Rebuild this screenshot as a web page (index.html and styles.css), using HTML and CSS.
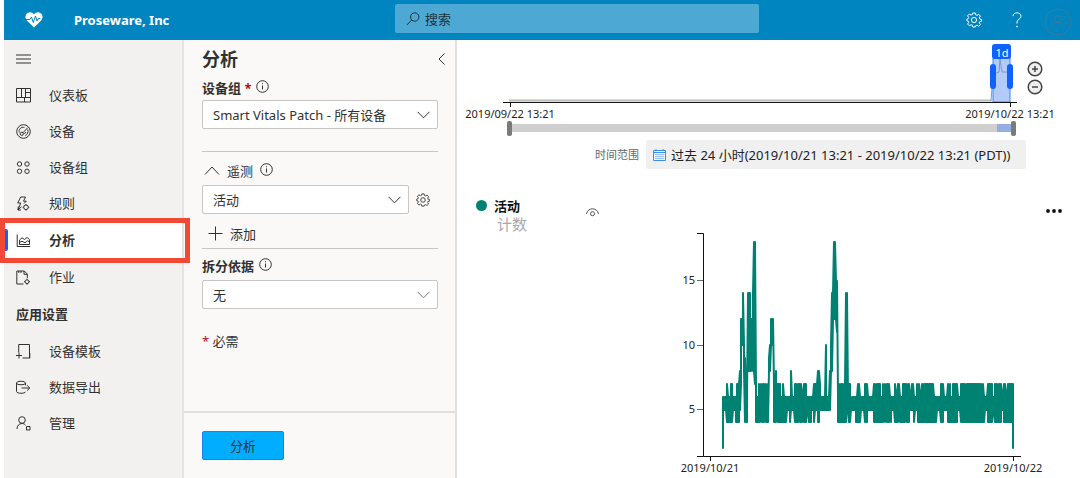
FILE: index.html
```html
<!DOCTYPE html>
<html lang="zh-CN">
<head>
<meta charset="utf-8">
<title>Proseware, Inc</title>
<link rel="stylesheet" href="styles.css">
</head>
<body>
<div class="app">
  <header class="topbar">
    <svg class="logo" viewBox="0 0 18 16" width="18" height="16" aria-hidden="true">
      <path fill="#fff" d="M9 15.600 2.300 9C-.6 6 .2 2.300 2.600.9 4.800-.3 7.600.3 9 2.600 10.400.3 13.200-.3 15.400.9 17.800 2.300 18.600 6 15.700 9Z"/>
      <path class="line pulse" d="M.5 7.500H5L6.500 5l1.800 5.500L10.500 4l1.600 5 1.200-2.500h2"/>
    </svg>
    <h1 class="brand">Proseware, Inc</h1>
    <label class="search">
      <svg class="line" viewBox="0 0 14 14" width="14" height="14" aria-hidden="true"><circle cx="8.700" cy="5" r="4.200"/><path d="M5.700 8 .8 13"/></svg>
      <input type="search" placeholder="搜索" aria-label="搜索">
    </label>
    <div class="tools">
      <button class="icon-btn" aria-label="设置">
        <svg class="line" viewBox="0 0 16 16" width="16" height="16"><use href="#gear"/></svg>
      </button>
      <button class="icon-btn help" aria-label="帮助">
        <svg class="line" viewBox="0 0 10 16" width="10" height="16"><path d="M1 4.200C1 2.200 2.700.8 4.900.8S9 2.200 9 4.300C9 7 5 7.400 5 10v1.500"/><circle cx="5" cy="14.500" r=".5"/></svg>
      </button>
      <button class="icon-btn account" aria-label="帐户">
        <svg class="line" viewBox="0 0 28 28" width="28" height="28"><circle cx="14" cy="14" r="13"/><circle cx="14" cy="11" r="3.500"/><path d="M9 20v-1c0-2.700 2.200-4.500 5-4.500s5 1.800 5 4.500v1"/></svg>
      </button>
    </div>
  </header>

  <div class="body">
    <nav class="sidebar">
      <button class="menu-btn" aria-label="菜单">
        <svg class="line" viewBox="0 0 15 10" width="15" height="10"><path d="M0 1h15M0 5h15M0 9h15"/></svg>
      </button>
      <ul class="nav">
        <li><a class="nav-item" href="#"><svg class="line" viewBox="0 0 15 15" width="15" height="15"><path d="M.5.500h14v13.500H.5ZM5.500.5v9M.5 9.500h14M9.500 9.500V.5M9.500 4.500h5M8.500 9.500V14"/></svg>仪表板</a></li>
        <li><a class="nav-item" href="#"><svg class="line" viewBox="0 0 15 15" width="15" height="15"><circle cx="7.500" cy="7.500" r="6.800"/><circle cx="5.800" cy="9.800" r="1.600"/><path d="m7 8.700 4.700-5M3.300 8.500C2.500 5.500 4.500 3.500 7 3.300c1 0 1.500.2 1.500.2M11.800 5.500c.8 2.500-.2 5-2.500 6.200M8.300 10l1.700-2"/></svg>设备</a></li>
        <li><a class="nav-item" href="#"><svg class="line" viewBox="0 0 15 15" width="15" height="15"><circle cx="3.500" cy="4" r="2.200"/><circle cx="11" cy="4" r="2.200"/><circle cx="3.500" cy="11.300" r="2.200"/><circle cx="11" cy="11.300" r="2.200"/></svg>设备组</a></li>
        <li><a class="nav-item" href="#"><svg class="line" viewBox="0 0 15 15" width="15" height="15"><path d="M9.500 1H4.700L1.700 7h3L2 14l3.500-3.300M9.500 1 7.500 5.200h2.800L8 7.500M2 14l.3-3.500M2 14h3"/><circle cx="10" cy="11.300" r="2.300"/><path d="M10 8v1M10 13.600v1M6.700 11.300h1M12.300 11.300h1"/></svg>规则</a></li>
        <li><a class="nav-item selected" href="#" aria-current="page"><svg class="line" viewBox="0 0 15 15" width="15" height="15"><path d="M1.200 1.500v12h13M3.500 11.500V7l2.500-2.200 2.500 1.700 2.700-2.200 2.300 2.500v4.700ZM3.500 9.500l2.500-1.300 3 1.600 2.500-2 2 1"/></svg>分析</a></li>
        <li><a class="nav-item" href="#"><svg class="line" viewBox="0 0 15 15" width="15" height="15"><path d="M7.500 14H.8V1h7.500l3 3v4M8 1v3.300h3.300M2.800 1v2M5 1v2"/><circle cx="11" cy="11.700" r="1.900"/><path d="M11 8.700v1M11 13.700v1M8 11.700h1M13 11.700h1"/></svg>作业</a></li>
        <li class="nav-heading">应用设置</li>
        <li><a class="nav-item" href="#"><svg class="line" viewBox="0 0 15 15" width="15" height="15"><path d="M2.700 8.500V.5h10.800v13.500H6.500M0 11.500h6M3 8.500v6M13.800 9v5.300"/></svg>设备模板</a></li>
        <li><a class="nav-item" href="#"><svg class="line" viewBox="0 0 15 15" width="15" height="15"><ellipse cx="5" cy="3" rx="4.500" ry="1.800"/><path d="M.5 3v8.500c0 2.300 9 2.300 9 .2M9.500 3v2.500M5.500 8h8.200M11 5.300 13.800 8 11 10.700"/></svg>数据导出</a></li>
        <li><a class="nav-item" href="#"><svg class="line" viewBox="0 0 15 15" width="15" height="15"><circle cx="6" cy="4" r="3.300"/><path d="M1 13c0-3.300 2-5.500 5-5.500 1.500 0 2.700.6 3.500 1.500M10.500 10.500h3.500v3.500h-3.500Z"/></svg>管理</a></li>
      </ul>
      <div class="callout" aria-hidden="true"></div>
    </nav>

    <form class="panel">
      <div class="panel-body">
        <div class="panel-head">
          <h2>分析</h2>
          <button type="button" class="icon-btn" aria-label="折叠">
            <svg class="line" viewBox="0 0 8 12" width="8" height="12"><path d="M6.500.5 1 6l5.500 5.500"/></svg>
          </button>
        </div>
        <div class="label-row first">
          <label for="group">设备组 <span class="req">*</span></label>
          <svg class="line" viewBox="0 0 13 13" width="13" height="13"><use href="#info"/></svg>
        </div>
        <div class="field">
          <select id="group"><option>Smart Vitals Patch - 所有设备</option></select>
          <svg class="line" viewBox="0 0 13 8" width="13" height="8"><use href="#chev"/></svg>
        </div>
        <section class="telemetry">
          <div class="label-row plain">
            <svg class="line" viewBox="0 0 16 9" width="16" height="9"><path d="M1 8.500 8 1l7 7.500"/></svg>
            <label for="metric">遥测</label>
            <svg class="line" viewBox="0 0 13 13" width="13" height="13"><use href="#info"/></svg>
          </div>
          <div class="metric-row">
            <div class="field">
              <select id="metric"><option>活动</option></select>
              <svg class="line" viewBox="0 0 13 8" width="13" height="8"><use href="#chev"/></svg>
            </div>
            <button type="button" class="icon-btn" aria-label="遥测设置"><svg class="line" viewBox="0 0 16 16" width="14" height="14"><use href="#gear"/></svg></button>
          </div>
          <button type="button" class="add-btn">
            <svg class="line" viewBox="0 0 15 15" width="15" height="15"><path d="M7.500.5v14M.5 7.500h14"/></svg>添加
          </button>
        </section>
        <div class="label-row split">
          <label for="split">拆分依据</label>
          <svg class="line" viewBox="0 0 13 13" width="13" height="13"><use href="#info"/></svg>
        </div>
        <div class="field">
          <select id="split"><option>无</option></select>
          <svg class="line light" viewBox="0 0 13 8" width="13" height="8"><use href="#chev"/></svg>
        </div>
        <p class="required-note"><span class="req">*</span> 必需</p>
      </div>
      <div class="panel-foot"><button type="button" class="primary">分析</button></div>
    </form>

    <main class="content">
      <div class="overview">
        <svg class="overview-chart" viewBox="0 0 623 100" role="img" aria-label="2019/09/22 13:21 - 2019/10/22 13:21">
          <path class="ov-line" d="M52 60.500H534.500"/>
          <rect class="ov-window" x="536" y="18" width="17" height="44"/>
          <path class="ov-spike" d="M534 61 536 34l3-1 3-1 1-13 2 13h8"/>
          <rect class="ov-cap" x="535" y="4" width="19" height="15" rx="3"/>
          <text class="ov-cap-text" x="545" y="17">1d</text>
          <rect class="ov-handle" x="533" y="24" width="6" height="25" rx="3"/>
          <rect class="ov-handle" x="550" y="24" width="6" height="25" rx="3"/>
          <path class="axis" d="M46 62.500H560M53.500 62v5M553.500 62v5"/>
          <text class="axis-label" x="53" y="78">2019/09/22 13:21</text>
          <text class="axis-label" x="553" y="78">2019/10/22 13:21</text>
          <rect class="track" x="52" y="84" width="505" height="8"/>
          <rect class="track-window" x="540" y="84" width="17" height="8"/>
          <rect class="thumb" x="50" y="81" width="5" height="15" rx="2"/>
          <rect class="thumb" x="554" y="81" width="5" height="15" rx="2"/>
        </svg>
        <div class="zoom-btns">
          <button class="icon-btn" aria-label="放大"><svg viewBox="0 0 16 16" width="16" height="16"><circle cx="8" cy="8" r="6.800"/><path d="M8 5v6M5 8h6"/></svg></button>
          <button class="icon-btn" aria-label="缩小"><svg viewBox="0 0 16 16" width="16" height="16"><circle cx="8" cy="8" r="6.800"/><path d="M5 8h6"/></svg></button>
        </div>
      </div>
      <div class="range-row">
        <span class="range-label" id="range-label">时间范围</span>
        <button class="range-btn" aria-describedby="range-label">
          <svg class="calendar" viewBox="0 0 13 12" width="13" height="12"><path d="M.5 1.500h12v10H.5ZM.5 3.500h12M3 0v2M10 0v2"/><path class="cells" d="M2.500 5.500h8.500M2.500 7.500h8.500M2.500 9.500h8.500"/></svg>
          过去 24 小时(2019/10/21 13:21 - 2019/10/22 13:21 (PDT))
        </button>
      </div>
      <div class="legend">
        <span class="dot"></span>
        <div class="series"><strong>活动</strong><span>计数</span></div>
        <button class="icon-btn eye" aria-label="显示或隐藏"><svg viewBox="0 0 13 9" width="13" height="9"><path d="M.5 6C1.200 2.500 3.600.8 6.500.8S11.800 2.500 12.500 6"/><circle cx="6.500" cy="5.700" r="2"/></svg></button>
        <button class="icon-btn more" aria-label="更多"><svg viewBox="0 0 16 4" width="16" height="4"><circle cx="2" cy="2" r="1.900"/><circle cx="8" cy="2" r="1.900"/><circle cx="14" cy="2" r="1.900"/></svg></button>
      </div>
      <svg class="chart" viewBox="0 0 623 248" role="img" aria-label="活动">
        <path id="series" class="series-line"/>
        <path class="axis" d="M240 3.500h6.500v223H240M246.500 226.500H564M253.500 226v5M556.500 226v5"/>
        <path class="tick" d="M240 50.500h6M240 115.500h6M240 179.500h6"/>
        <g class="y-label"><text x="238" y="54">15</text><text x="238" y="119">10</text><text x="238" y="183">5</text></g>
        <text class="axis-label" x="253" y="242">2019/10/21</text>
        <text class="axis-label" x="556" y="242">2019/10/22</text>
      </svg>
    </main>
  </div>
</div>

<svg class="defs" aria-hidden="true">
  <symbol id="gear" viewBox="0 0 16 16"><circle cx="8" cy="8" r="2.600"/><path d="M6.700 1h2.600l.4 1.900 1.200.5 1.700-1.100 1.800 1.800-1.100 1.700.5 1.200 1.800.4v1.800l-1.800.4-.5 1.200 1.100 1.700-1.800 1.800-1.700-1.100-1.200.5L9.300 15H6.700l-.4-1.800-1.200-.5-1.700 1.100L1.600 12l1.100-1.700-.5-1.200L.8 8.700V7.100l1.400-.4.500-1.200-1.100-1.700L3.400 2l1.700 1.100 1.200-.5Z"/></symbol>
  <symbol id="info" viewBox="0 0 13 13"><circle cx="6.500" cy="6.500" r="5.800"/><path d="M6.500 5.500v4M6.500 3.200v1"/></symbol>
  <symbol id="chev" viewBox="0 0 13 8"><path d="M.5.800l6 6 6-6"/></symbol>
</svg>
<script src="chart.js"></script>
</body>
</html>
```
FILE: styles.css
```css
* { box-sizing: border-box; }
body {
  margin: 0;
  background: #fff;
  color: #323130;
  font: 13px/18px "Noto Sans", "Noto Sans CJK SC", sans-serif;
}
button, input, select { font: inherit; color: inherit; }
button { cursor: pointer; }
h1, h2, p, ul { margin: 0; padding: 0; }
.defs { display: none; }
.line { fill: none; stroke: currentColor; stroke-width: 1; flex: none; }
.icon-btn { display: flex; padding: 0; border: 0; background: none; }

.app { display: flex; flex-direction: column; min-height: 100vh; padding-left: 4px; }
.topbar {
  display: grid;
  grid-template-columns: 70px 321px minmax(100px, 364px) 1fr;
  align-items: center;
  height: 40px;
  background: #0085c0;
  color: #fff;
}
.logo { margin-left: 21px; }
.logo .pulse { stroke: #0085c0; }
.brand { font-size: 13px; line-height: 18px; font-weight: 700; }
.search {
  display: flex;
  align-items: center;
  gap: 5px;
  height: 29px;
  margin-top: -3px;
  padding: 0 11px;
  border-radius: 2px;
  background: #4da9d4;
  color: #20303a;
}
.search input { flex: 1; min-width: 0; padding: 0; border: 0; background: none; outline: 0; }
.search input::placeholder { color: #20303a; opacity: 1; }
.tools { display: flex; justify-content: flex-end; align-items: center; gap: 30px; padding-right: 8px; }
.help { margin-right: -8px; }
.account { margin-top: 4px; color: #3f7b99; }

.body { display: flex; flex: 1; }
.sidebar { position: relative; flex: none; width: 180px; border-right: 2px solid #e4e3e2; background: #f2f1f0; }
.menu-btn { display: flex; align-items: center; height: 37px; padding: 0 12px; border: 0; background: none; }
.nav { list-style: none; }
.nav-item {
  display: flex;
  align-items: center;
  gap: 18px;
  height: 36px;
  padding-left: 12px;
  color: inherit;
  text-decoration: none;
}
.nav-item.selected { height: 38px; padding-left: 0; background: #fff; font-weight: 700; }
.nav-item.selected::before {
  content: "";
  width: 4px;
  height: 22px;
  margin-right: -10px;
  border-radius: 2px;
  background: #0f62fe;
}
.nav-heading { padding: 10px 12px; font-weight: 700; }
.callout { position: absolute; top: 178px; left: -4px; width: 190px; height: 45px; border: 5px solid #f04a36; z-index: 1; }

.panel { display: flex; flex-direction: column; flex: none; width: 273px; border-right: 2px solid #e1e0df; background: #faf9f8; }
.panel-body { flex: 1; padding: 7px 17px 0 18px; }
.panel-head { display: flex; justify-content: space-between; align-items: center; margin-right: -8px; }
h2 { font-size: 18px; line-height: 24px; font-weight: 700; }
.label-row { display: flex; align-items: center; gap: 5px; height: 29px; }
.label-row label { font-weight: 700; }
.label-row svg { margin-bottom: 2px; }
.first { padding-top: 4px; }
.plain { gap: 7px; }
.plain label { font-weight: 400; }
.plain svg:first-child { margin: 0 0 0 2px; }
.req { color: #b0101c; }
.field { display: grid; flex: 1; align-items: center; }
.field > * { grid-area: 1 / 1; }
.field svg { justify-self: end; margin-right: 8px; pointer-events: none; }
.light { color: #777; }
select {
  appearance: none;
  width: 100%;
  height: 29px;
  padding: 0 24px 0 10px;
  border: 1px solid #c8c6c4;
  border-radius: 2px;
  background: #fff;
}
.telemetry { margin-top: 22px; padding-top: 4px; border-top: 1px solid #c8c6c4; border-bottom: 1px solid #c8c6c4; }
.metric-row { display: flex; align-items: center; gap: 7px; padding-right: 8px; }
.add-btn { display: flex; align-items: center; gap: 7px; height: 34px; padding: 5px 6px 0; border: 0; background: none; }
.split { height: 31px; padding-top: 2px; }
.required-note { margin-top: 23px; }
.panel-foot { padding: 18px; border-top: 2px solid #e1e0df; }
.primary { width: 82px; height: 29px; border: 1px solid #1683f2; border-radius: 2px; background: #00adff; }

.content { flex: 1; min-width: 0; }
.overview { position: relative; }
.overview-chart, .chart { display: block; width: 100%; }
.axis { fill: none; stroke: #111; }
.tick { fill: none; stroke: #666; }
.axis-label { font-size: 11px; text-anchor: middle; fill: #222; }
.y-label { font-size: 11px; text-anchor: end; fill: #222; }
.ov-line { stroke: #bbb; stroke-width: 2; }
.ov-window { fill: #b3cbf8; stroke: #3b82f6; }
.ov-spike { fill: none; stroke: #8098c4; stroke-width: 1; }
.ov-cap, .ov-handle { fill: #0f62fe; }
.ov-cap-text { font-size: 11px; text-anchor: middle; fill: #fff; }
.track { fill: #cfcfcf; }
.track-window { fill: #94aee0; }
.thumb { fill: #7a7a7a; }
.zoom-btns { position: absolute; top: 21px; right: 37px; display: grid; gap: 2px; }
.zoom-btns svg { fill: #eee; stroke: #444; stroke-width: 1.5; }
.range-row { display: flex; justify-content: flex-end; align-items: center; gap: 7px; padding-right: 54px; }
.range-label { font-size: 11px; color: #666; }
.range-btn {
  display: flex;
  align-items: center;
  gap: 5px;
  min-width: 380px;
  height: 29px;
  padding: 0 8px 0 7px;
  border: 0;
  border-radius: 2px;
  background: #f0f0f0;
  color: #222;
  white-space: nowrap;
}
.calendar { fill: none; stroke: #3b8eea; }
.calendar .cells { stroke-dasharray: 1 1; }
.legend { display: flex; align-items: flex-start; height: 40px; margin-top: 21px; padding: 7px 18px 0 19px; }
.dot { width: 11px; height: 11px; margin-top: 3px; border-radius: 50%; background: #008272; }
.series { width: 93px; padding-left: 7px; color: #111; }
.series strong, .series span { display: block; }
.series span { padding-left: 3px; font-size: 15px; color: #aaa; }
.eye { margin: 11px 0 0 6px; }
.eye svg { fill: none; stroke: #555; }
.more { margin: 12px 0 0 auto; }
.more svg { fill: #111; }
.series-line { fill: none; stroke: #008272; stroke-width: 2; stroke-linejoin: round; stroke-linecap: round; }
```
FILE: chart.js
```js
// Each run is "pixels:low-high" and covers that many one-unit columns.
const runs = (
  "1:2-6 3:5-6 1:4-7 3:4-6 2:4-7 3:5-6 1:4-6 3:4-7 1:5-8 1:7-12 1:10-12 1:10-14 1:8-10 1:4-9 2:4-6 " +
  "1:8-14 2:8-14 1:8-12 1:9-12 1:8-14 1:8-18 1:7-18 1:4-7 2:4-6 1:4-7 1:4-6 1:5-7 1:4-6 2:4-7 1:5-6 1:4-7 1:4-6 1:4-7 " +
  "1:8-9 1:8-10 1:10-12 2:10-12 1:4-7 1:4-6 1:4-8 1:5-7 3:4-7 2:4-6 1:4-7 3:4-6 3:5-6 1:4-6 1:5-8 3:5-6 2:4-7 1:4-6 1:4-7 1:5-7 " +
  "2:4-7 1:4-6 1:5-6 2:4-7 1:4-7 2:5-6 3:4-6 1:5-6 1:5-6 1:4-7 1:5-7 2:5-7 2:4-8 1:5-7 5:5-6 1:5-10 3:5-6 " +
  "1:5-8 1:8-10 1:8-14 1:12-14 2:12-18 1:12-15 1:11-15 1:4-6 1:4-7 1:4-6 3:4-7 1:4-6 1:4-7 1:4-14 1:6-14 1:5-6 " +
  "2:4-7 1:5-5 4:5-6 2:4-6 2:4-7 1:4-6 4:5-6 1:4-7 1:4-7 " +
  "1:4-7 6:5-6 2:4-7 1:4-6 2:4-7 2:4-7 2:4-6 1:4-7 1:5-6 1:4-7 1:5-6 2:4-7 1:4-7 1:5-6 1:4-6 3:5-6 1:4-7 2:4-6 1:4-7 1:5-7 " +
  "3:4-6 2:4-7 1:4-7 1:5-7 1:4-6 2:4-7 2:5-6 2:5-7 1:4-6 2:5-6 1:5-7 1:4-6 1:4-7 2:4-6 1:4-7 1:4-6 4:4-7 2:4-7 3:4-7 1:4-7 " +
  "3:4-6 1:5-6 3:5-6 1:4-7 2:4-7 4:5-6 1:4-7 1:4-6 1:4-7 2:4-6 5:4-7 3:5-6 5:4-7 1:4-6 6:4-7 1:4-7 5:4-7 3:4-7 1:4-6 1:4-7 1:4-6 3:5-6 5:4-7 " +
  "2:5-6 3:4-7 1:4-6 3:4-7 2:5-6 2:4-7 2:4-6 5:4-7"
).split(" ");
const y = v => Math.round(244 - v * 12.9);
const first = 266, last = 556;
const cols = runs.flatMap(run => {
  const [n, span] = run.split(":");
  const [lo, hi] = span.split("-").map(Number);
  return Array.from({ length: +n }, () => [lo, hi]);
}).slice(0, last - first);
const points = cols.map(([lo, hi], i) => {
  const x = first + i;
  return i % 2 ? `${x} ${y(hi)} ${x} ${y(lo)}` : `${x} ${y(lo)} ${x} ${y(hi)}`;
});
document.getElementById("series").setAttribute("d", `M${points.join("L")}L${last} ${y(7)} ${last} ${y(2)}`);
```
